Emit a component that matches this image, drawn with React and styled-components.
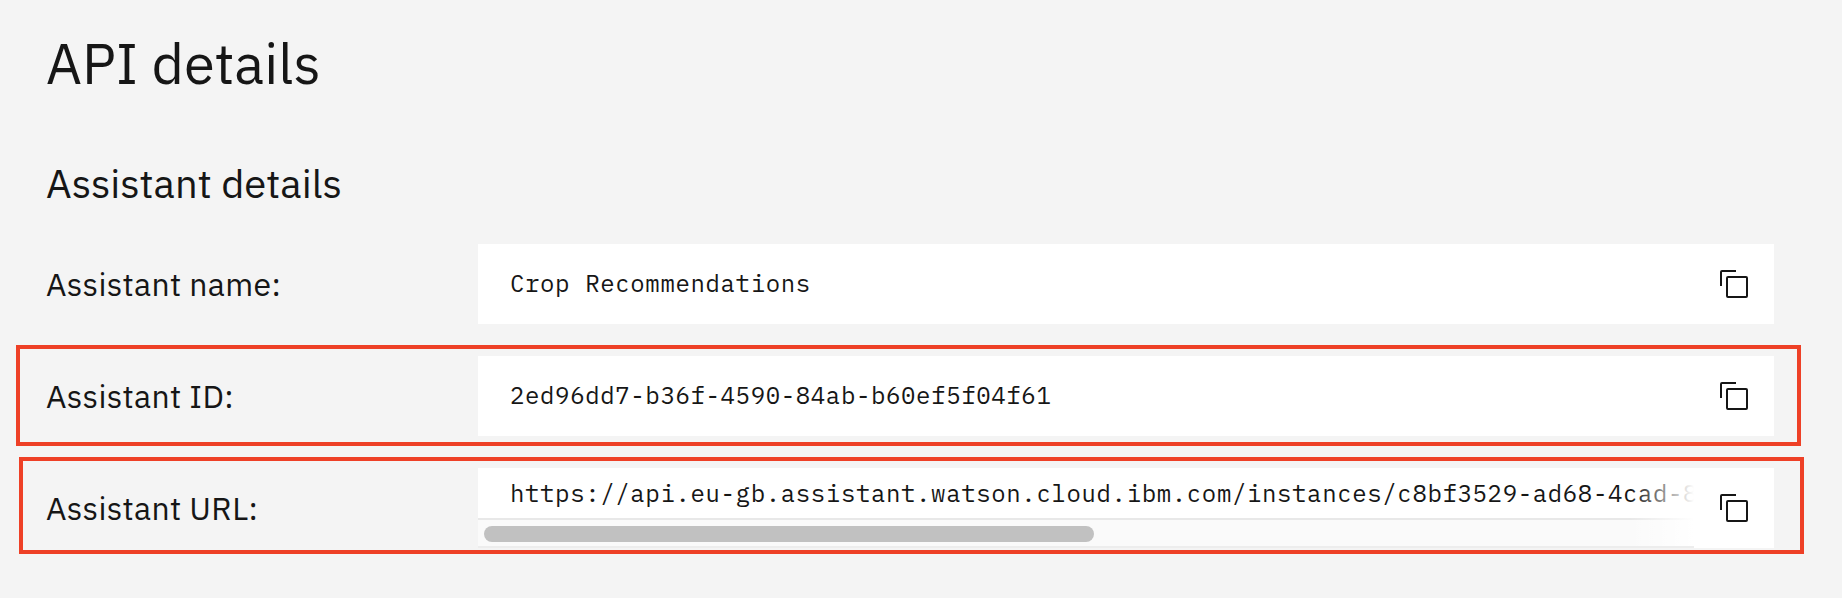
import React from "react";
import styled, { createGlobalStyle } from "styled-components";

const GlobalStyle = createGlobalStyle`
  *, *::before, *::after { box-sizing: border-box; }
  body { margin: 0; background: #f4f4f4; color: #161616; }
`;

const sans = `"IBM Plex Sans", "Noto Sans", sans-serif`;
const mono = `"IBM Plex Mono", "Liberation Mono", monospace`;

const Page = styled.main`
  position: relative;
  width: 1842px;
  height: 598px;
  padding: 31px 68px 0 46px;
  overflow: hidden;
  background: #f4f4f4;
  font-family: ${sans};
`;

const Title = styled.h1`
  margin: 0;
  height: 64px;
  font-size: 56px;
  font-weight: 400;
  line-height: 64px;
  white-space: nowrap;
`;

const Subtitle = styled.h2`
  margin: 64px 0 0;
  height: 48px;
  font-size: 40px;
  font-weight: 400;
  line-height: 48px;
  white-space: nowrap;
`;

const Details = styled.dl`
  display: flex;
  flex-direction: column;
  gap: 32px;
  margin: 37px 0 0;
`;

const Row = styled.div`
  display: grid;
  grid-template-columns: 432px 1296px;
  height: 80px;
`;

const Label = styled.dt`
  padding-top: 20px;
  font-size: 32px;
  line-height: 40px;
  letter-spacing: 0.32px;
  white-space: nowrap;
`;

const Field = styled.dd`
  display: flex;
  margin: 0;
  background: #fff;
`;

const Viewport = styled.div`
  position: relative;
  display: flex;
  flex-direction: column;
  flex: 1;
  min-width: 0;
  overflow: hidden;
`;

const Value = styled.div`
  flex: 1;
  min-height: 0;
  padding-left: 32px;
  overflow: hidden;
  font-family: ${mono};
  font-size: 24px;
  line-height: ${({ $scrolls }) => ($scrolls ? 50 : 78)}px;
  letter-spacing: 0.64px;
  white-space: nowrap;
`;

const Track = styled.div`
  flex: none;
  height: 30px;
  padding: 6px 6px 4px;
  border-top: 2px solid #e8e8e8;
  border-bottom: 2px solid #ededed;
  background: #fafafa;
`;

const Thumb = styled.div`
  width: 610px;
  height: 16px;
  border-radius: 8px;
  background: #c1c1c1;
`;

const Fade = styled.div`
  position: absolute;
  top: 0;
  right: 0;
  bottom: 2px;
  width: 64px;
  background: linear-gradient(to right, rgba(255, 255, 255, 0), #fff);
`;

const CopyButton = styled.button`
  display: flex;
  align-items: center;
  justify-content: center;
  width: 80px;
  height: 80px;
  padding: 0;
  border: 0;
  background: #fff;
  color: #161616;
`;

const Highlight = styled.div`
  position: absolute;
  left: ${({ $left }) => $left}px;
  top: ${({ $top }) => $top}px;
  width: 1785px;
  height: ${({ $height }) => $height}px;
  border: 4px solid #ee4026;
  pointer-events: none;
`;

const CopyIcon = () => (
  <svg width="32" height="32" viewBox="0 0 32 32" fill="currentColor" aria-hidden="true">
    <path d="M28,10V28H10V10H28m0-2H10a2,2,0,0,0-2,2V28a2,2,0,0,0,2,2H28a2,2,0,0,0,2-2V10a2,2,0,0,0-2-2Z" />
    <path d="M4,18H2V4A2,2,0,0,1,4,2H18V4H4Z" />
  </svg>
);

const details = [
  { label: "Assistant name:", value: "Crop Recommendations" },
  { label: "Assistant ID:", value: "2ed96dd7-b36f-4590-84ab-b60ef5f04f61" },
  {
    label: "Assistant URL:",
    value: "https://api.eu-gb.assistant.watson.cloud.ibm.com/instances/c8bf3529-ad68-4cad-8",
    scrolls: true,
  },
];

export default function App() {
  return (
    <Page>
      <GlobalStyle />
      <Title>API details</Title>
      <Subtitle>Assistant details</Subtitle>
      <Details>
        {details.map(({ label, value, scrolls }) => (
          <Row key={label}>
            <Label>{label}</Label>
            <Field>
              <Viewport>
                <Value $scrolls={scrolls}>{value}</Value>
                {scrolls && (
                  <>
                    <Track>
                      <Thumb />
                    </Track>
                    <Fade />
                  </>
                )}
              </Viewport>
              <CopyButton aria-label="Copy to clipboard">
                <CopyIcon />
              </CopyButton>
            </Field>
          </Row>
        ))}
      </Details>
      <Highlight $left={16} $top={345} $height={101} />
      <Highlight $left={19} $top={457} $height={97} />
    </Page>
  );
}
